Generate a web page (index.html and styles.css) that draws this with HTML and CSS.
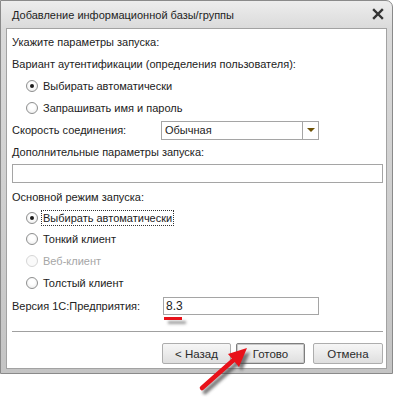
FILE: index.html
```html
<!DOCTYPE html>
<html lang="ru">
<head>
<meta charset="utf-8">
<title>Добавление информационной базы/группы</title>
<link rel="stylesheet" href="styles.css">
</head>
<body>
<div class="window">
  <div class="titlebar">
    <span class="title">Добавление информационной базы/группы</span>
    <svg class="close" width="12" height="12" viewBox="0 0 12 12"><path d="M2 2 L10 10 M10 2 L2 10" stroke="#333" stroke-width="2.4" stroke-linecap="square"/></svg>
  </div>
  <div class="client">
    <div class="row h20">Укажите параметры запуска:</div>
    <div class="row h23">Вариант аутентификации (определения пользователя):</div>
    <div class="row h22 radio-row"><span class="radio checked"></span><span class="rlabel">Выбирать автоматически</span></div>
    <div class="row h22 radio-row"><span class="radio"></span><span class="rlabel">Запрашивать имя и пароль</span></div>
    <div class="row h22 field">
      <span class="flabel">Скорость соединения:</span>
      <div class="select"><span class="select-text">Обычная</span><span class="select-btn"><span class="tri"></span></span></div>
    </div>
    <div class="row h22">Дополнительные параметры запуска:</div>
    <div class="row h23 input-row"><div class="input wide"></div></div>
    <div class="row h21">Основной режим запуска:</div>
    <div class="row h21 radio-row"><span class="radio checked"></span><span class="rlabel focus">Выбирать автоматически</span></div>
    <div class="row h22 radio-row"><span class="radio"></span><span class="rlabel">Тонкий клиент</span></div>
    <div class="row h22 radio-row disabled"><span class="radio"></span><span class="rlabel">Веб-клиент</span></div>
    <div class="row h22 radio-row"><span class="radio"></span><span class="rlabel">Толстый клиент</span></div>
    <div class="row h24 field">
      <span class="flabel v">Версия 1С:Предприятия:</span>
      <div class="input version"><span class="input-text">8.3</span><span class="mark"></span></div>
    </div>
    <div class="sep"></div>
    <div class="buttons">
      <button class="btn b1">&lt; Назад</button>
      <button class="btn b2 default">Готово</button>
      <button class="btn b3">Отмена</button>
    </div>
  </div>
</div>
<svg class="arrow" width="80" height="60" viewBox="190 340 80 60">
  <defs>
    <filter id="blur" x="-30%" y="-30%" width="160%" height="160%"><feGaussianBlur stdDeviation="1.8"/></filter>
  </defs>
  <g transform="translate(3 4)" filter="url(#blur)" opacity="0.7">
    <path d="M202 388 L233.6 360" stroke="#444" stroke-width="4.5" stroke-linecap="round"/>
    <polygon points="247,348 228,354 239,367" fill="#444"/>
  </g>
  <path d="M202 388 L233.6 360" stroke="#e8121a" stroke-width="4.5" stroke-linecap="round"/>
  <polygon points="247,348 228,354 239,367" fill="#e8121a"/>
</svg>
</body>
</html>
```

FILE: styles.css
```css
html, body {
  margin: 0;
  padding: 0;
  background: #ffffff;
}
body {
  font-family: "Liberation Sans", Arial, sans-serif;
  font-size: 11px;
  color: #222;
  position: relative;
  width: 395px;
  height: 397px;
  overflow: hidden;
}
.window {
  box-sizing: border-box;
  width: 393px;
  height: 374px;
  border: 1px solid #8a8a8a;
  border-radius: 0 7px 0 0;
  background: linear-gradient(to bottom, #ededed 0px, #dadada 28px, #cfcfcf 200px, #c4c4c4 100%);
  padding: 0 5px 4px 5px;
  display: flex;
  flex-direction: column;
}
.titlebar {
  height: 27px;
  flex: none;
  display: flex;
  align-items: center;
  justify-content: space-between;
  padding: 1px 2px 0 6px;
  box-sizing: border-box;
}
.title {
  color: #1e1e1e;
  font-size: 11px;
}
.close {
  display: block;
  margin-right: 1px;
  margin-top: -2px;
}
.client {
  flex: 1;
  background: #ffffff;
  border: 1px solid #a2a2a2;
  padding: 3px 3px 0 5px;
  display: flex;
  flex-direction: column;
}
.row {
  display: flex;
  align-items: center;
  flex: none;
  white-space: nowrap;
}
.h20 { height: 20px; }
.h21 { height: 21px; }
.h22 { height: 22px; }
.h23 { height: 23px; }
.h24 { height: 24px; }
.radio-row {
  padding-left: 14px;
}
.radio {
  box-sizing: border-box;
  width: 12px;
  height: 12px;
  border-radius: 50%;
  border: 1px solid #8e8f8f;
  background: radial-gradient(circle at 50% 40%, #ffffff 30%, #e8e8e8 100%);
  position: relative;
  flex: none;
  margin-right: 3px;
}
.radio.checked::after {
  content: "";
  position: absolute;
  left: 3px;
  top: 3px;
  width: 4px;
  height: 4px;
  border-radius: 50%;
  background: #1c1c1c;
}
.rlabel {
  border: 1px dotted transparent;
  padding: 0 1px;
  line-height: 14px;
}
.rlabel.focus {
  border-color: #333;
}
.disabled .radio {
  border-color: #d6d6d6;
  background: #fafafa;
}
.disabled .rlabel {
  color: #a6a6a6;
}
.flabel {
  width: 149px;
  flex: none;
}
.flabel.v {
  width: 151px;
}
.select {
  box-sizing: border-box;
  width: 158px;
  height: 19px;
  border: 1px solid #a5a5a5;
  display: flex;
  align-items: stretch;
}
.select-text {
  flex: 1;
  padding-left: 3px;
  line-height: 17px;
}
.select-btn {
  width: 15px;
  border-left: 1px solid #a5a5a5;
  display: flex;
  align-items: center;
  justify-content: center;
}
.tri {
  width: 0;
  height: 0;
  border-left: 4px solid transparent;
  border-right: 4px solid transparent;
  border-top: 4px solid #6e5206;
}
.input-row {
  align-items: flex-start;
}
.input {
  box-sizing: border-box;
  border: 1px solid #a5a5a5;
  height: 19px;
}
.input.wide {
  width: 371px;
  margin-top: 1px;
}
.input.version {
  width: 156px;
  height: 18px;
  position: relative;
  padding-left: 2px;
  line-height: 16px;
  font-size: 12px;
}
.mark {
  position: absolute;
  left: 0;
  top: 19px;
  width: 18px;
  height: 3px;
  background: #e8121a;
  box-shadow: 4px 4px 3px rgba(80, 80, 80, 0.55);
}
.sep {
  flex: none;
  height: 1px;
  background: #a0a0a0;
  margin-top: 13px;
  width: 371px;
}
.buttons {
  flex: none;
  display: flex;
  margin-top: 11px;
  padding-left: 150px;
}
.btn {
  box-sizing: border-box;
  height: 21px;
  font-family: "Liberation Sans", Arial, sans-serif;
  font-size: 11.5px;
  color: #2a2a2a;
  border: 1px solid #adadad;
  border-radius: 2px;
  background: linear-gradient(to bottom, #f6f6f6 0%, #ebebeb 50%, #dedede 100%);
  padding: 0;
  margin: 0;
}
.b1 { width: 69px; }
.b2 { width: 69px; margin-left: 5px; }
.b3 { width: 70px; margin-left: 8px; }
.btn.default {
  border-color: #7e7e7e;
  box-shadow: inset 0 0 0 1px #c8c8c8;
}
.arrow {
  position: absolute;
  left: 190px;
  top: 340px;
}
```
